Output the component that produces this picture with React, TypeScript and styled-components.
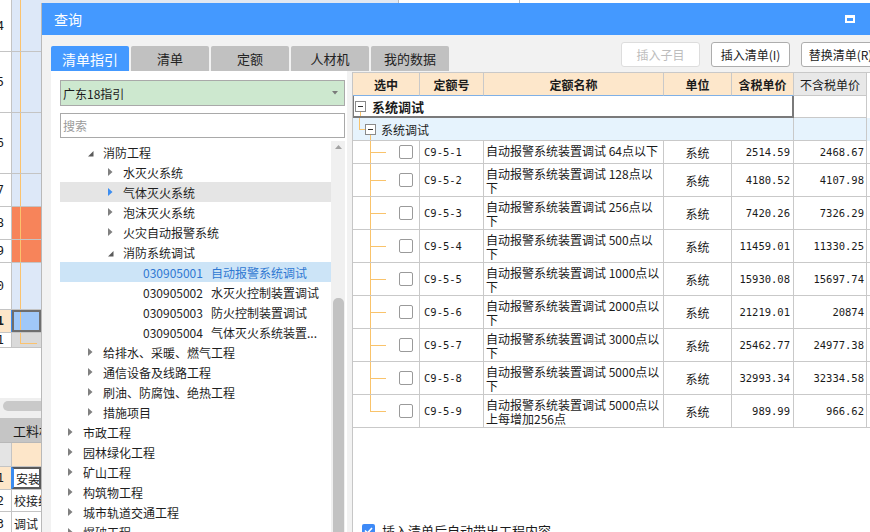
import React from "react"
import styled, { createGlobalStyle } from "styled-components"

const CJK = `"Noto Sans CJK SC", "Noto Sans", sans-serif`
const MONO = `"DejaVu Sans Mono", "Liberation Mono", monospace`

const GlobalStyle = createGlobalStyle`
  html, body { margin: 0; padding: 0; background: #fff; }
  body { font-family: ${CJK}; font-size: 12px; color: #1b1b1b; }
  *, *::before, *::after { box-sizing: border-box; }
`

/**
 * Spreadsheet behind the dialog
 */

type Tone = "blue" | "orange" | "active" | "gray" | "peach" | "plain" | "current"

interface ISheetRow {
  num: string
  h: number
  numBg: string
  tone: Tone
  bold?: boolean
  text?: string
}

const upperRows: ISheetRow[] = [
  { num: "4", h: 52, numBg: "#fff", tone: "blue" },
  { num: "5", h: 61, numBg: "#fff", tone: "blue" },
  { num: "6", h: 61, numBg: "#fff", tone: "blue" },
  { num: "7", h: 33, numBg: "#fff", tone: "blue" },
  { num: "8", h: 33, numBg: "#fff", tone: "orange" },
  { num: "9", h: 23, numBg: "#fff", tone: "orange" },
  { num: "0", h: 47, numBg: "#fff", tone: "blue" },
  { num: "1", h: 23, numBg: "#fde6c9", tone: "active", bold: true },
  { num: "1", h: 15, numBg: "#fff", tone: "gray" },
]

const lowerRows: ISheetRow[] = [
  { num: "", h: 24, numBg: "#e4e4e4", tone: "peach" },
  { num: "1", h: 23, numBg: "#fde6c9", tone: "current", text: "安装" },
  { num: "2", h: 22, numBg: "#fff", tone: "plain", text: "校接线" },
  { num: "3", h: 24, numBg: "#fff", tone: "plain", text: "调试" },
]

const toneBg: Record<Tone, string> = {
  blue: "#dde8f8",
  orange: "#f7845a",
  active: "#a0c8f8",
  gray: "#dadada",
  peach: "#fde6c9",
  plain: "#fff",
  current: "#fff",
}

const Screen = styled.div`
  position: relative;
  width: 870px;
  height: 532px;
  overflow: hidden;
  background: #fff;
`

const Sheet = styled.div`
  display: flex;
  width: 100%;
  height: 100%;
`

const SheetLeft = styled.div`
  width: 41px;
  flex-shrink: 0;
  display: flex;
  flex-direction: column;
`

const SheetRow = styled.div<{ $h: number }>`
  display: flex;
  height: ${(p) => p.$h}px;
  flex-shrink: 0;
  border-bottom: 1px solid #c4c4c4;
`

const RowNum = styled.div<{ $bg: string; $bold?: boolean; $marker?: boolean }>`
  width: 12px;
  flex-shrink: 0;
  display: flex;
  align-items: center;
  justify-content: flex-end;
  padding-right: 7px;
  overflow: hidden;
  background: ${(p) => p.$bg};
  border-right: 1px solid ${(p) => (p.$marker ? "#3b8cf0" : "#c4c4c4")};
  font: ${(p) => (p.$bold ? 700 : 400)} 12px ${MONO};
`

const SheetCell = styled.div<{ $tone: Tone }>`
  position: relative;
  flex: 1;
  display: flex;
  align-items: center;
  padding-left: 2px;
  overflow: hidden;
  white-space: nowrap;
  font-size: 12px;
  background: ${(p) => toneBg[p.$tone]};
  border: ${(p) =>
    p.$tone === "active" ? "2px solid #6e6e6e" : p.$tone === "current" ? "2px solid #5a5a5a" : "0"};
  border-left: ${(p) => (p.$tone === "current" ? "2px solid #3b8cf0" : undefined)};

  &::before {
    content: "";
    display: ${(p) => (["peach", "plain", "current"].includes(p.$tone) ? "none" : "block")};
    position: absolute;
    left: ${(p) => (p.$tone === "active" ? 6 : 8)}px;
    top: ${(p) => (p.$tone === "active" ? -2 : 0)}px;
    bottom: ${(p) => (p.$tone === "gray" ? "auto" : "0")};
    height: ${(p) => (p.$tone === "gray" ? "11px" : "auto")};
    width: ${(p) => (p.$tone === "gray" ? "17px" : "0")};
    border-left: 1px solid #fbc26d;
    border-bottom: ${(p) => (p.$tone === "gray" ? "1px solid #fbc26d" : "0")};
  }
`

const SheetGap = styled.div`
  height: 50px;
  flex-shrink: 0;
`

const HScroll = styled.div`
  height: 20px;
  flex-shrink: 0;
  padding: 3px 0 0 3px;
  background: #efefef;
`

const HThumb = styled.div`
  width: 44px;
  height: 10px;
  border-radius: 5px;
  background: #c9c9c9;
`

const LowerHead = styled.div`
  height: 25px;
  flex-shrink: 0;
  display: flex;
  align-items: center;
  padding-left: 13px;
  background: #c5c5c5;
  font-size: 13px;
  white-space: nowrap;
  overflow: hidden;
  border-bottom: 1px solid #b8b8b8;
`

const SheetRight = styled.div`
  flex: 1;
  display: flex;
  align-items: flex-start;
`

const TopStrip = styled.div<{ $w: number; $bg: string }>`
  width: ${(p) => p.$w}px;
  height: 3px;
  background: ${(p) => p.$bg};
  border-right: 1px solid #bdbdbd;
`

/**
 * Dialog
 */

const Dialog = styled.div`
  position: absolute;
  left: 41px;
  top: 3px;
  width: 840px;
  height: 570px;
  display: flex;
  flex-direction: column;
  background: #f2f2f2;
  border-left: 1px solid #b9b9b9;
`

const TitleBar = styled.div`
  height: 32px;
  flex-shrink: 0;
  display: flex;
  align-items: center;
  justify-content: space-between;
  padding: 0 26px 0 12px;
  background: #4499ff;
  color: #fff;
  font-size: 14px;
`

const MaxIcon = styled.span`
  width: 10px;
  height: 8px;
  border: 2px solid #fff;
  border-top-width: 3px;
`

const Body = styled.div`
  flex: 1;
  min-height: 0;
  display: flex;
  flex-direction: column;
  padding-left: 9px;
`

const TopRow = styled.div`
  height: 36px;
  flex-shrink: 0;
  display: flex;
  justify-content: space-between;
`

const Tabs = styled.div`
  display: flex;
  gap: 2px;
  align-self: flex-end;
`

const Tab = styled.div<{ $active?: boolean }>`
  width: 78px;
  height: 25px;
  display: flex;
  align-items: center;
  justify-content: center;
  border-radius: 2px 2px 0 0;
  background: ${(p) => (p.$active ? "#4499ff" : "#c1c1c1")};
  color: ${(p) => (p.$active ? "#fff" : "#232323")};
  font-size: ${(p) => (p.$active ? 14 : 13)}px;
`

const Actions = styled.div`
  display: flex;
  gap: 11px;
  padding: 7px 1px 0 0;
`

const ActionButton = styled.button<{ $off?: boolean }>`
  width: 79px;
  height: 25px;
  padding: 0;
  border: 1px solid ${(p) => (p.$off ? "#dddddd" : "#adadad")};
  border-radius: 3px;
  background: #fff;
  color: ${(p) => (p.$off ? "#bdbdbd" : "#1d1d1d")};
  font: 12px ${CJK};
  white-space: nowrap;
  overflow: hidden;
`

const Content = styled.div`
  flex: 1;
  min-height: 0;
  display: flex;
  gap: 5px;
`

/**
 * Guide pane (left)
 */

const GuidePane = styled.div`
  width: 296px;
  flex-shrink: 0;
  display: flex;
  flex-direction: column;
  padding: 9px 2px 0 9px;
  background: #fff;
`

const Picker = styled.div`
  height: 26px;
  flex-shrink: 0;
  display: flex;
  align-items: center;
  justify-content: space-between;
  padding: 0 6px 0 2px;
  border: 1px solid #a9a9a9;
  background: #cde8cf;
  font-size: 12px;
`

const Search = styled.div`
  height: 25px;
  flex-shrink: 0;
  margin-top: 7px;
  display: flex;
  align-items: center;
  padding-left: 2px;
  border: 1px solid #a9a9a9;
  color: #9a9a9a;
  font-size: 12px;
`

const TreeBox = styled.div`
  flex: 1;
  min-height: 0;
  margin-top: 3px;
  display: flex;
  overflow: hidden;
`

const TreeList = styled.div`
  flex: 1;
  padding-top: 1px;
  display: flex;
  flex-direction: column;
`

type Mark = "hover" | "selected" | undefined

const TreeRow = styled.div<{ $level: number; $mark: Mark }>`
  height: 20px;
  flex-shrink: 0;
  display: flex;
  align-items: center;
  padding-left: ${(p) => 8 + p.$level * 20}px;
  white-space: nowrap;
  font-size: 12px;
  background: ${(p) => (p.$mark === "hover" ? "#e5e5e5" : p.$mark === "selected" ? "#cce4f7" : "transparent")};
  color: ${(p) => (p.$mark === "selected" ? "#2f78d2" : "#1e1e1e")};
`

const ArrowSlot = styled.span`
  width: 15px;
  flex-shrink: 0;
  display: flex;
  align-items: center;
`

const Code = styled.span`
  margin-right: 8px;
`

const VScroll = styled.div`
  width: 14px;
  flex-shrink: 0;
  display: flex;
  flex-direction: column;
  align-items: center;
  padding-top: 4px;
  background: #f0f0f0;
`

const VThumb = styled.div`
  width: 11px;
  flex: 1;
  margin-top: 149px;
  border-radius: 5px 5px 0 0;
  background: #c2c2c2;
`

type Kind = "open" | "closed" | "leaf"

interface INode {
  level: number
  label: string
  code?: string
  kind: Kind
  mark?: Mark
}

const treeNodes: INode[] = [
  { level: 1, label: "消防工程", kind: "open" },
  { level: 2, label: "水灭火系统", kind: "closed" },
  { level: 2, label: "气体灭火系统", kind: "closed", mark: "hover" },
  { level: 2, label: "泡沫灭火系统", kind: "closed" },
  { level: 2, label: "火灾自动报警系统", kind: "closed" },
  { level: 2, label: "消防系统调试", kind: "open" },
  { level: 3, code: "030905001", label: "自动报警系统调试", kind: "leaf", mark: "selected" },
  { level: 3, code: "030905002", label: "水灭火控制装置调试", kind: "leaf" },
  { level: 3, code: "030905003", label: "防火控制装置调试", kind: "leaf" },
  { level: 3, code: "030905004", label: "气体灭火系统装置...", kind: "leaf" },
  { level: 1, label: "给排水、采暖、燃气工程", kind: "closed" },
  { level: 1, label: "通信设备及线路工程", kind: "closed" },
  { level: 1, label: "刷油、防腐蚀、绝热工程", kind: "closed" },
  { level: 1, label: "措施项目", kind: "closed" },
  { level: 0, label: "市政工程", kind: "closed" },
  { level: 0, label: "园林绿化工程", kind: "closed" },
  { level: 0, label: "矿山工程", kind: "closed" },
  { level: 0, label: "构筑物工程", kind: "closed" },
  { level: 0, label: "城市轨道交通工程", kind: "closed" },
  { level: 0, label: "爆破工程", kind: "closed" },
]

const TreeArrow: React.FC<{ kind: Kind; hot?: boolean }> = ({ kind, hot }) => {
  if (kind === "leaf") return null
  if (kind === "open")
    return (
      <svg width="6" height="6" viewBox="0 0 6 6" style={{ marginTop: 4 }}>
        <polygon points="5.5,0 5.5,5.5 0,5.5" fill="#5a5a5a" />
      </svg>
    )
  return (
    <svg width="5" height="8" viewBox="0 0 5 8">
      <polygon points="0,0 4.5,4 0,8" fill={hot ? "#3c8df0" : "#808080"} />
    </svg>
  )
}

/**
 * Result pane (right)
 */

const COLS = "67px 64px 180px 68px 62px 73px"

const ResultPane = styled.div`
  flex: 1;
  margin-top: 1px;
  display: flex;
  flex-direction: column;
  background: #fff;
  border-left: 1px solid #c6c6c6;
`

const HeadRow = styled.div`
  display: grid;
  grid-template-columns: ${COLS};
  height: 24px;
  flex-shrink: 0;
  border-top: 1px solid #c9c9c9;
`

const HeadCell = styled.div<{ $plain?: boolean }>`
  display: flex;
  align-items: center;
  justify-content: center;
  background: ${(p) => (p.$plain ? "#e8e8e8" : "#fde7cb")};
  border-right: 1px solid #c9c9c9;
  border-bottom: 1px solid ${(p) => (p.$plain ? "#c9c9c9" : "#7fb0e6")};
  font-weight: ${(p) => (p.$plain ? 400 : 700)};
  font-size: 12px;
  white-space: nowrap;
`

const GroupRow = styled.div<{ $h: number; $tint?: boolean }>`
  display: grid;
  grid-template-columns: 441px 73px;
  height: ${(p) => p.$h}px;
  flex-shrink: 0;
  background: ${(p) => (p.$tint ? "#e6f3fd" : "#fff")};
`

const GroupMain = styled.div<{ $outlined?: boolean; $indent: number }>`
  position: relative;
  display: flex;
  align-items: center;
  padding-left: ${(p) => p.$indent}px;
  border-right: ${(p) => (p.$outlined ? "2px solid #7a7a7a" : "1px solid #c9c9c9")};
  border-bottom: ${(p) => (p.$outlined ? "2px solid #7a7a7a" : "1px solid #c9c9c9")};
  border-left: ${(p) => (p.$outlined ? "1px solid #7a7a7a" : "0")};

  &::before {
    content: "";
    position: absolute;
    left: 6px;
    top: ${(p) => (p.$outlined ? "16px" : "0")};
    bottom: ${(p) => (p.$outlined ? "0" : "auto")};
    width: ${(p) => (p.$outlined ? "0" : "6px")};
    height: ${(p) => (p.$outlined ? "auto" : "12px")};
    border-left: 1px solid #f9c36b;
    border-bottom: ${(p) => (p.$outlined ? "0" : "1px solid #f9c36b")};
  }

  &::after {
    content: "";
    display: ${(p) => (p.$outlined ? "none" : "block")};
    position: absolute;
    left: 17px;
    top: 17px;
    bottom: 0;
    border-left: 1px solid #f9c36b;
  }
`

const GroupSide = styled.div`
  border-right: 1px solid #c9c9c9;
  border-bottom: 1px solid #c9c9c9;
`

const Toggle = styled.span`
  position: relative;
  width: 11px;
  height: 11px;
  flex-shrink: 0;
  border: 1px solid #8a8a8a;
  background: #fff;

  &::after {
    content: "";
    position: absolute;
    left: 2px;
    right: 2px;
    top: 4px;
    border-top: 1px solid #333;
  }
`

const GroupLabel = styled.span<{ $bold?: boolean }>`
  margin-left: ${(p) => (p.$bold ? 6 : 5)}px;
  font-size: ${(p) => (p.$bold ? 13 : 12)}px;
  font-weight: ${(p) => (p.$bold ? 700 : 400)};
  white-space: nowrap;
`

const DataRow = styled.div<{ $h: number }>`
  display: grid;
  grid-template-columns: ${COLS};
  height: ${(p) => p.$h}px;
  flex-shrink: 0;
  border-bottom: 1px solid #c9c9c9;
`

const Cell = styled.div<{ $align?: "left" | "center" | "right"; $pad?: number }>`
  display: flex;
  align-items: center;
  justify-content: ${(p) => (p.$align === "right" ? "flex-end" : p.$align === "center" ? "center" : "flex-start")};
  padding: 0 ${(p) => (p.$align === "right" ? p.$pad ?? 3 : 0)}px 0 ${(p) => (p.$align === "right" ? 0 : p.$pad ?? 0)}px;
  border-right: 1px solid #c9c9c9;
  white-space: nowrap;
  overflow: hidden;
`

const LeadCell = styled(Cell)<{ $last?: boolean }>`
  position: relative;
  padding-left: 46px;

  &::before {
    content: "";
    position: absolute;
    left: 17px;
    top: 0;
    height: ${(p) => (p.$last ? "50%" : "100%")};
    border-left: 1px solid #f9c36b;
  }

  &::after {
    content: "";
    position: absolute;
    left: 17px;
    top: 50%;
    width: 16px;
    border-top: 1px solid #f9c36b;
  }
`

const Box = styled.span`
  width: 14px;
  height: 14px;
  border: 1px solid #9a9a9a;
  border-radius: 2px;
  background: #fff;
`

const Mono = styled.span`
  font: 10.5px ${MONO};
  color: #1a1a1a;
`

const NameCell = styled.div`
  display: flex;
  flex-direction: column;
  padding: 3px 0 0 2px;
  border-right: 1px solid #c9c9c9;
  font-size: 12px;
  line-height: 14px;
  white-space: nowrap;
  overflow: hidden;
`

const Footer = styled.div`
  margin-top: 94px;
  height: 17px;
  flex-shrink: 0;
  display: flex;
  align-items: center;
  gap: 7px;
  padding-left: 9px;
  font-size: 13px;
`

const Checked = styled.span`
  width: 13px;
  height: 13px;
  display: flex;
  align-items: center;
  justify-content: center;
  border-radius: 2px;
  background: #3d8af7;
`

interface IQuota {
  code: string
  name: string[]
  price: string
  net: string
}

const quotas: IQuota[] = [
  { code: "C9-5-1", name: ["自动报警系统装置调试 64点以下"], price: "2514.59", net: "2468.67" },
  { code: "C9-5-2", name: ["自动报警系统装置调试 128点以", "下"], price: "4180.52", net: "4107.98" },
  { code: "C9-5-3", name: ["自动报警系统装置调试 256点以", "下"], price: "7420.26", net: "7326.29" },
  { code: "C9-5-4", name: ["自动报警系统装置调试 500点以", "下"], price: "11459.01", net: "11330.25" },
  { code: "C9-5-5", name: ["自动报警系统装置调试 1000点以", "下"], price: "15930.08", net: "15697.74" },
  { code: "C9-5-6", name: ["自动报警系统装置调试 2000点以", "下"], price: "21219.01", net: "20874" },
  { code: "C9-5-7", name: ["自动报警系统装置调试 3000点以", "下"], price: "25462.77", net: "24977.38" },
  { code: "C9-5-8", name: ["自动报警系统装置调试 5000点以", "下"], price: "32993.34", net: "32334.58" },
  { code: "C9-5-9", name: ["自动报警系统装置调试 5000点以", "上每增加256点"], price: "989.99", net: "966.62" },
]

const headers = ["选中", "定额号", "定额名称", "单位", "含税单价"]

export default function App() {
  return (
    <>
      <GlobalStyle />
      <Screen>
        <Sheet>
          <SheetLeft>
            {upperRows.map((r, i) => (
              <SheetRow key={i} $h={r.h}>
                <RowNum $bg={r.numBg} $bold={r.bold} $marker={r.bold}>
                  {r.num}
                </RowNum>
                <SheetCell $tone={r.tone} />
              </SheetRow>
            ))}
            <SheetGap />
            <HScroll>
              <HThumb />
            </HScroll>
            <LowerHead>工料机</LowerHead>
            {lowerRows.map((r, i) => (
              <SheetRow key={i} $h={r.h}>
                <RowNum $bg={r.numBg} $marker={r.tone === "current"}>
                  {r.num}
                </RowNum>
                <SheetCell $tone={r.tone}>{r.text}</SheetCell>
              </SheetRow>
            ))}
          </SheetLeft>
          <SheetRight>
            <TopStrip $w={358} $bg="#e1e8f2" />
            <TopStrip $w={121} $bg="#fff" />
          </SheetRight>
        </Sheet>

        <Dialog>
          <TitleBar>
            <span>查询</span>
            <MaxIcon />
          </TitleBar>
          <Body>
            <TopRow>
              <Tabs>
                <Tab $active>清单指引</Tab>
                <Tab>清单</Tab>
                <Tab>定额</Tab>
                <Tab>人材机</Tab>
                <Tab>我的数据</Tab>
              </Tabs>
              <Actions>
                <ActionButton $off>插入子目</ActionButton>
                <ActionButton>插入清单(I)</ActionButton>
                <ActionButton>替换清单(R)</ActionButton>
              </Actions>
            </TopRow>

            <Content>
              <GuidePane>
                <Picker>
                  <span>广东18指引</span>
                  <svg width="6" height="4" viewBox="0 0 6 4">
                    <polygon points="0,0 6,0 3,3.5" fill="#7a7a7a" />
                  </svg>
                </Picker>
                <Search>搜索</Search>
                <TreeBox>
                  <TreeList>
                    {treeNodes.map((n, i) => (
                      <TreeRow key={i} $level={n.level} $mark={n.mark}>
                        <ArrowSlot>
                          <TreeArrow kind={n.kind} hot={n.mark === "hover"} />
                        </ArrowSlot>
                        {n.code && <Code>{n.code}</Code>}
                        <span>{n.label}</span>
                      </TreeRow>
                    ))}
                  </TreeList>
                  <VScroll>
                    <svg width="7" height="4" viewBox="0 0 7 4">
                      <polygon points="0,4 3.5,0 7,4" fill="#a3a3a3" />
                    </svg>
                    <VThumb />
                  </VScroll>
                </TreeBox>
              </GuidePane>

              <ResultPane>
                <HeadRow>
                  {headers.map((h) => (
                    <HeadCell key={h}>{h}</HeadCell>
                  ))}
                  <HeadCell $plain>不含税单价</HeadCell>
                </HeadRow>

                <GroupRow $h={22}>
                  <GroupMain $outlined $indent={1}>
                    <Toggle />
                    <GroupLabel $bold>系统调试</GroupLabel>
                  </GroupMain>
                  <GroupSide />
                </GroupRow>
                <GroupRow $h={23} $tint>
                  <GroupMain $indent={12}>
                    <Toggle />
                    <GroupLabel>系统调试</GroupLabel>
                  </GroupMain>
                  <GroupSide />
                </GroupRow>

                {quotas.map((q, i) => (
                  <DataRow key={q.code} $h={i === 0 ? 23 : 33}>
                    <LeadCell $last={i === quotas.length - 1}>
                      <Box />
                    </LeadCell>
                    <Cell $pad={4}>
                      <Mono>{q.code}</Mono>
                    </Cell>
                    <NameCell>
                      {q.name.map((line, j) => (
                        <span key={j}>{line}</span>
                      ))}
                    </NameCell>
                    <Cell $align="center">系统</Cell>
                    <Cell $align="right" $pad={3}>
                      <Mono>{q.price}</Mono>
                    </Cell>
                    <Cell $align="right" $pad={2}>
                      <Mono>{q.net}</Mono>
                    </Cell>
                  </DataRow>
                ))}

                <Footer>
                  <Checked>
                    <svg width="9" height="7" viewBox="0 0 9 7">
                      <polyline points="1,3.5 3.5,6 8,1" fill="none" stroke="#fff" strokeWidth="1.6" />
                    </svg>
                  </Checked>
                  <span>插入清单后自动带出工程内容</span>
                </Footer>
              </ResultPane>
            </Content>
          </Body>
        </Dialog>
      </Screen>
    </>
  )
}
